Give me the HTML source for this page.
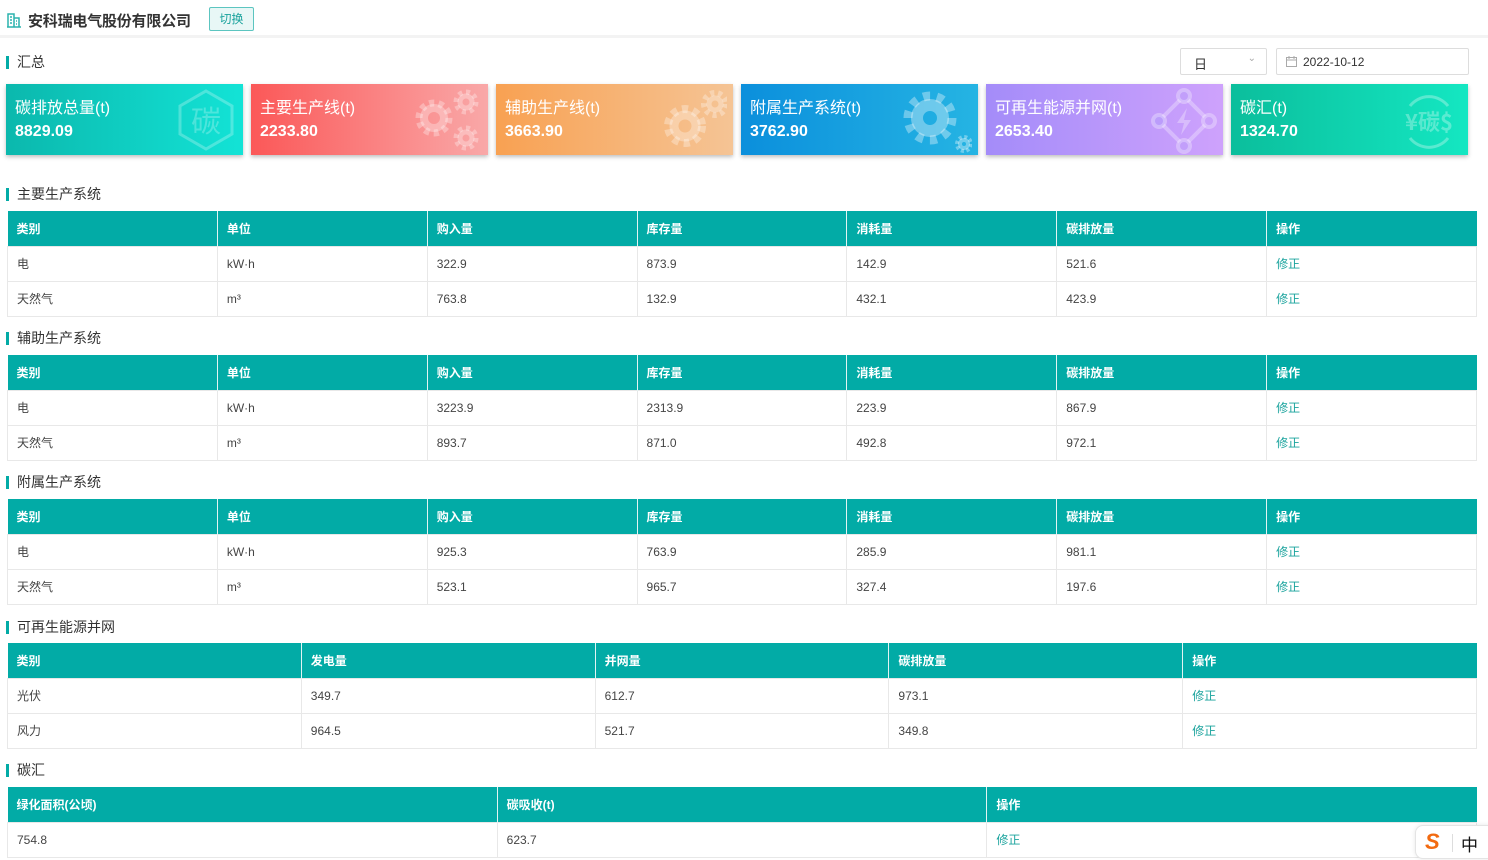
<!DOCTYPE html>
<html><head><meta charset="utf-8">
<style>
*{margin:0;padding:0;box-sizing:border-box}
body{width:1488px;height:860px;background:#fff;font-family:"Liberation Sans","Noto Sans CJK SC",sans-serif;color:#333;position:relative;overflow:hidden}
.abs{position:absolute}
.top{left:0;top:0;width:1488px;height:38px;border-bottom:3px solid #f3f3f3}
.title{left:28px;top:10px;font-size:15px;font-weight:bold;color:#333;letter-spacing:-0.2px}
.btn{left:209px;top:7px;width:45px;height:24px;border:1px solid #5cc5c0;background:#e8f7f6;color:#1aa39d;font-size:12px;text-align:center;line-height:22px;border-radius:2px}
.sec{font-size:14px;color:#333;padding-left:11px;height:16px;line-height:16px}
.sec:before{content:"";position:absolute;left:0;top:2px;width:3px;height:13px;background:#02aba6}
.card{top:84px;width:237px;height:71px;box-shadow:0 2px 4px rgba(0,0,0,.25);color:#fff;overflow:hidden}
.card .t{position:absolute;left:9px;top:15px;font-size:16px;line-height:20px}
.card .v{position:absolute;left:9px;top:38px;font-size:16px;line-height:20px;font-weight:bold}
.card svg{position:absolute;right:6px;top:4px}
table{position:absolute;left:7px;width:1470px;border-collapse:collapse;font-size:12px;table-layout:fixed}
th{background:#02aba6;color:#fff;text-align:left;font-weight:bold;height:35px;padding-left:9px;border-left:1px solid #e2f4f3}
td{height:35px;padding-left:9px;border:1px solid #e8e8e8;color:#444}
td.op{color:#1aa39d}
th:first-child{border-left:none}
.sel{left:1180px;top:48px;width:87px;height:27px;border:1px solid #ddd;border-radius:2px;font-size:13px;padding:5px 0 0 13px}
.date{left:1276px;top:48px;width:193px;height:27px;border:1px solid #ddd;border-radius:2px;font-size:12px;padding:6px 0 0 26px;color:#333}
</style></head><body>
<div class="abs top"></div>
<svg class="abs" style="left:6px;top:12px" width="16" height="16" viewBox="0 0 16 16"><path d="M2 15V2h6v13M8 6h5v9M1 15h14M4 5h2M4 8h2M4 11h2M10 9h1M10 12h1" stroke="#2bb3ad" stroke-width="1.5" fill="none"/></svg>
<div class="abs title">安科瑞电气股份有限公司</div>
<div class="abs btn">切换</div>
<div class="abs sec" style="left:6px;top:54px">汇总</div>
<div class="abs sel">日<span style="position:absolute;right:10px;top:4px;color:#aaa;font-size:10px">&#8964;</span></div>
<div class="abs date"><svg style="position:absolute;left:9px;top:7px" width="11" height="11" viewBox="0 0 11 11"><rect x="0.5" y="1.5" width="10" height="9" fill="none" stroke="#aaa"/><path d="M0.5 4h10M3 0v3M8 0v3" stroke="#aaa"/></svg>2022-10-12</div>

<div class="abs card" style="left:6px;background:linear-gradient(90deg,#0bb8ad,#13e3d6)"><div class="t">碳排放总量(t)</div><div class="v">8829.09</div>
<svg width="62" height="64" viewBox="0 0 62 64"><path d="M31 3L57 18V46L31 61L5 46V18Z" fill="none" stroke="rgba(255,255,255,.25)" stroke-width="3"/><text x="31" y="44" text-anchor="middle" font-size="30" fill="rgba(255,255,255,.25)" font-family="Noto Sans CJK SC">碳</text></svg></div>
<div class="abs card" style="left:251px;background:linear-gradient(90deg,#fb5858,#f9a8a8)"><div class="t">主要生产线(t)</div><div class="v">2233.80</div>
<svg width="72" height="66" viewBox="0 0 72 66"><g fill="none" stroke="rgba(255,255,255,.3)"><circle cx="24" cy="30" r="15" stroke-width="7" stroke-dasharray="5 4.4"/><circle cx="24" cy="30" r="10" stroke-width="8"/><circle cx="56" cy="14" r="10" stroke-width="5" stroke-dasharray="4 3.8"/><circle cx="56" cy="14" r="6" stroke-width="5"/><circle cx="56" cy="50" r="10" stroke-width="5" stroke-dasharray="4 3.8"/><circle cx="56" cy="50" r="6" stroke-width="5"/></g></svg></div>
<div class="abs card" style="left:496px;background:linear-gradient(90deg,#f8a152,#f5c495)"><div class="t">辅助生产线(t)</div><div class="v">3663.90</div>
<svg width="72" height="66" viewBox="0 0 72 66"><g fill="none" stroke="rgba(255,255,255,.3)"><circle cx="30" cy="38" r="17" stroke-width="8" stroke-dasharray="6 5"/><circle cx="30" cy="38" r="11" stroke-width="9"/><circle cx="60" cy="16" r="11" stroke-width="6" stroke-dasharray="4 3.8"/><circle cx="60" cy="16" r="6" stroke-width="5"/></g></svg></div>
<div class="abs card" style="left:741px;background:linear-gradient(90deg,#0b8fdc,#25b4e3)"><div class="t">附属生产系统(t)</div><div class="v">3762.90</div>
<svg width="72" height="68" viewBox="0 0 72 68"><g fill="none" stroke="rgba(255,255,255,.35)"><circle cx="30" cy="30" r="22" stroke-width="9" stroke-dasharray="7 6.8"/><circle cx="30" cy="30" r="13" stroke-width="12"/><circle cx="64" cy="56" r="7" stroke-width="4" stroke-dasharray="3 2.5"/><circle cx="64" cy="56" r="4" stroke-width="4"/></g></svg></div>
<div class="abs card" style="left:986px;background:linear-gradient(90deg,#a48cf9,#cea2fc)"><div class="t">可再生能源并网(t)</div><div class="v">2653.40</div>
<svg width="66" height="66" viewBox="0 0 66 66"><g fill="none" stroke="rgba(255,255,255,.3)" stroke-width="4"><path d="M33 8L58 33L33 58L8 33Z"/><circle cx="33" cy="8" r="6" fill="#c29ffb"/><circle cx="58" cy="33" r="6" fill="#c9a1fb"/><circle cx="33" cy="58" r="6" fill="#c29ffb"/><circle cx="8" cy="33" r="6" fill="#bb9cfb"/></g><path d="M36 20L26 35h7l-3 12 10-15h-7z" fill="rgba(255,255,255,.3)"/></svg></div>
<div class="abs card" style="left:1231px;background:linear-gradient(90deg,#0bbe9c,#14e7c2)"><div class="t">碳汇(t)</div><div class="v">1324.70</div>
<svg width="66" height="66" viewBox="0 0 66 66"><g fill="none" stroke="rgba(255,255,255,.3)" stroke-width="3"><path d="M14 18A24 24 0 0 1 52 18"/><path d="M52 50A24 24 0 0 1 14 50"/></g><text x="33" y="42" text-anchor="middle" font-size="22" font-weight="bold" fill="rgba(255,255,255,.3)" font-family="Noto Sans CJK SC">¥碳$</text></svg></div>

<div class="abs sec" style="left:6px;top:186px">主要生产系统</div>
<table style="top:211px"><tr><th>类别</th><th>单位</th><th>购入量</th><th>库存量</th><th>消耗量</th><th>碳排放量</th><th>操作</th></tr>
<tr><td>电</td><td>kW·h</td><td>322.9</td><td>873.9</td><td>142.9</td><td>521.6</td><td class="op">修正</td></tr>
<tr><td>天然气</td><td>m³</td><td>763.8</td><td>132.9</td><td>432.1</td><td>423.9</td><td class="op">修正</td></tr></table>

<div class="abs sec" style="left:6px;top:330px">辅助生产系统</div>
<table style="top:355px"><tr><th>类别</th><th>单位</th><th>购入量</th><th>库存量</th><th>消耗量</th><th>碳排放量</th><th>操作</th></tr>
<tr><td>电</td><td>kW·h</td><td>3223.9</td><td>2313.9</td><td>223.9</td><td>867.9</td><td class="op">修正</td></tr>
<tr><td>天然气</td><td>m³</td><td>893.7</td><td>871.0</td><td>492.8</td><td>972.1</td><td class="op">修正</td></tr></table>

<div class="abs sec" style="left:6px;top:474px">附属生产系统</div>
<table style="top:499px"><tr><th>类别</th><th>单位</th><th>购入量</th><th>库存量</th><th>消耗量</th><th>碳排放量</th><th>操作</th></tr>
<tr><td>电</td><td>kW·h</td><td>925.3</td><td>763.9</td><td>285.9</td><td>981.1</td><td class="op">修正</td></tr>
<tr><td>天然气</td><td>m³</td><td>523.1</td><td>965.7</td><td>327.4</td><td>197.6</td><td class="op">修正</td></tr></table>

<div class="abs sec" style="left:6px;top:619px">可再生能源并网</div>
<table style="top:643px"><tr><th>类别</th><th>发电量</th><th>并网量</th><th>碳排放量</th><th>操作</th></tr>
<tr><td>光伏</td><td>349.7</td><td>612.7</td><td>973.1</td><td class="op">修正</td></tr>
<tr><td>风力</td><td>964.5</td><td>521.7</td><td>349.8</td><td class="op">修正</td></tr></table>

<div class="abs sec" style="left:6px;top:762px">碳汇</div>
<table style="top:787px"><tr><th>绿化面积(公顷)</th><th>碳吸收(t)</th><th>操作</th></tr>
<tr><td>754.8</td><td>623.7</td><td class="op">修正</td></tr></table>

<div class="abs" style="left:1415px;top:825px;width:80px;height:34px;background:#fff;border:1px solid #e4e4e4;border-radius:8px;box-shadow:0 0 4px rgba(0,0,0,.1)">
<span style="position:absolute;left:9px;top:3px;color:#f26a10;font-size:22px;font-weight:bold;font-style:italic">S</span>
<span style="position:absolute;left:36px;top:8px;width:1px;height:18px;background:#ddd"></span>
<span style="position:absolute;left:45px;top:5px;font-size:17px;color:#111">中</span></div>
</body></html>
